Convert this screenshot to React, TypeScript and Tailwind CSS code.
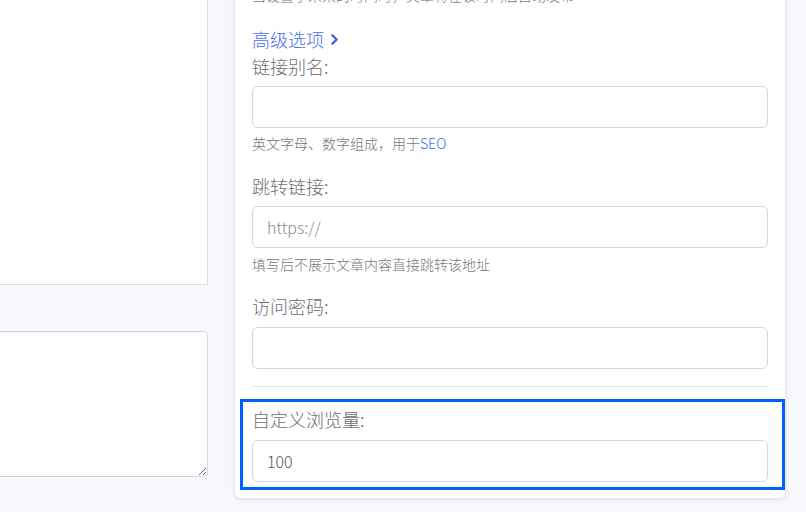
import type { ReactNode } from 'react';

const FONT = { fontFamily: '"Noto Sans CJK SC", "Noto Sans", sans-serif' };

function FieldLabel({ children, className = '' }: { children: ReactNode; className?: string }) {
  return <div className={`text-[18px] leading-[26px] font-light text-[#6e6e6e] ${className}`}>{children}</div>;
}

function TextInput({
  value,
  placeholder,
  className = '',
}: {
  value?: string;
  placeholder?: string;
  className?: string;
}) {
  return (
    <input
      type="text"
      defaultValue={value}
      placeholder={placeholder}
      className={`block h-[42px] w-full rounded-[6px] border border-[#d6d4e8] bg-white px-[14px] text-[16px] font-light text-[#555] placeholder:text-[#888] outline-none ${className}`}
      style={FONT}
    />
  );
}

function Hint({ children, className = '' }: { children: ReactNode; className?: string }) {
  return <p className={`text-[14px] leading-[20px] font-light text-[#777] ${className}`}>{children}</p>;
}

export default function App() {
  return (
    <div className="flex h-[512px] w-[806px] overflow-hidden bg-[#f7f8fc]" style={FONT}>
      {/* left editor column, cut off at the left edge */}
      <div className="flex w-[208px] shrink-0 flex-col">
        <div className="h-[285px] border-b border-r border-[#dcdce4] bg-white" />
        <textarea className="mt-[46px] ml-[-8px] h-[146px] w-[216px] resize rounded-[4px] border border-[#d6d4e8] bg-white outline-none" />
      </div>

      {/* settings card */}
      <div className="ml-[27px] mt-[-25px] flex h-[523px] w-[550px] shrink-0 flex-col self-start rounded-[6px] bg-white px-[17px] pt-[10px] pb-[8px] shadow-[0_1px_5px_rgba(0,0,0,0.12)]">
        <Hint className="whitespace-nowrap">当设置了未来的时间时，文章将在该时间后自动发布</Hint>

        <button
          type="button"
          className="mt-[21px] flex items-center gap-[4px] self-start text-[18px] leading-[26px] font-light text-[#4a6cf2]"
        >
          高级选项
          <svg
            viewBox="0 0 24 24"
            className="h-[13px] w-[13px] text-[#4159e0]"
            fill="none"
            stroke="currentColor"
            strokeWidth="4"
            strokeLinecap="round"
            strokeLinejoin="round"
          >
            <path d="M8 4l8 8-8 8" />
          </svg>
        </button>

        <FieldLabel className="mt-[1px]">链接别名:</FieldLabel>
        <TextInput className="mt-[7px]" />
        <Hint className="mt-[5px]">
          英文字母、数字组成，用于<span className="text-[#3f6ee6]">SEO</span>
        </Hint>

        <FieldLabel className="mt-[20px]">跳转链接:</FieldLabel>
        <TextInput className="mt-[7px]" placeholder="https://" />
        <Hint className="mt-[6px]">填写后不展示文章内容直接跳转该地址</Hint>

        <FieldLabel className="mt-[19px]">访问密码:</FieldLabel>
        <TextInput className="mt-[8px]" />

        <div className="mt-[17px] h-px bg-[#e6e6ec]" />

        <div className="mt-[12px] ml-[-12px] mr-[-17px] border-[3px] border-[#0060ff] pl-[9px] pr-[14px] pt-[4px] pb-[5px]">
          <FieldLabel>自定义浏览量:</FieldLabel>
          <TextInput className="mt-[8px]" value="100" />
        </div>
      </div>
    </div>
  );
}
